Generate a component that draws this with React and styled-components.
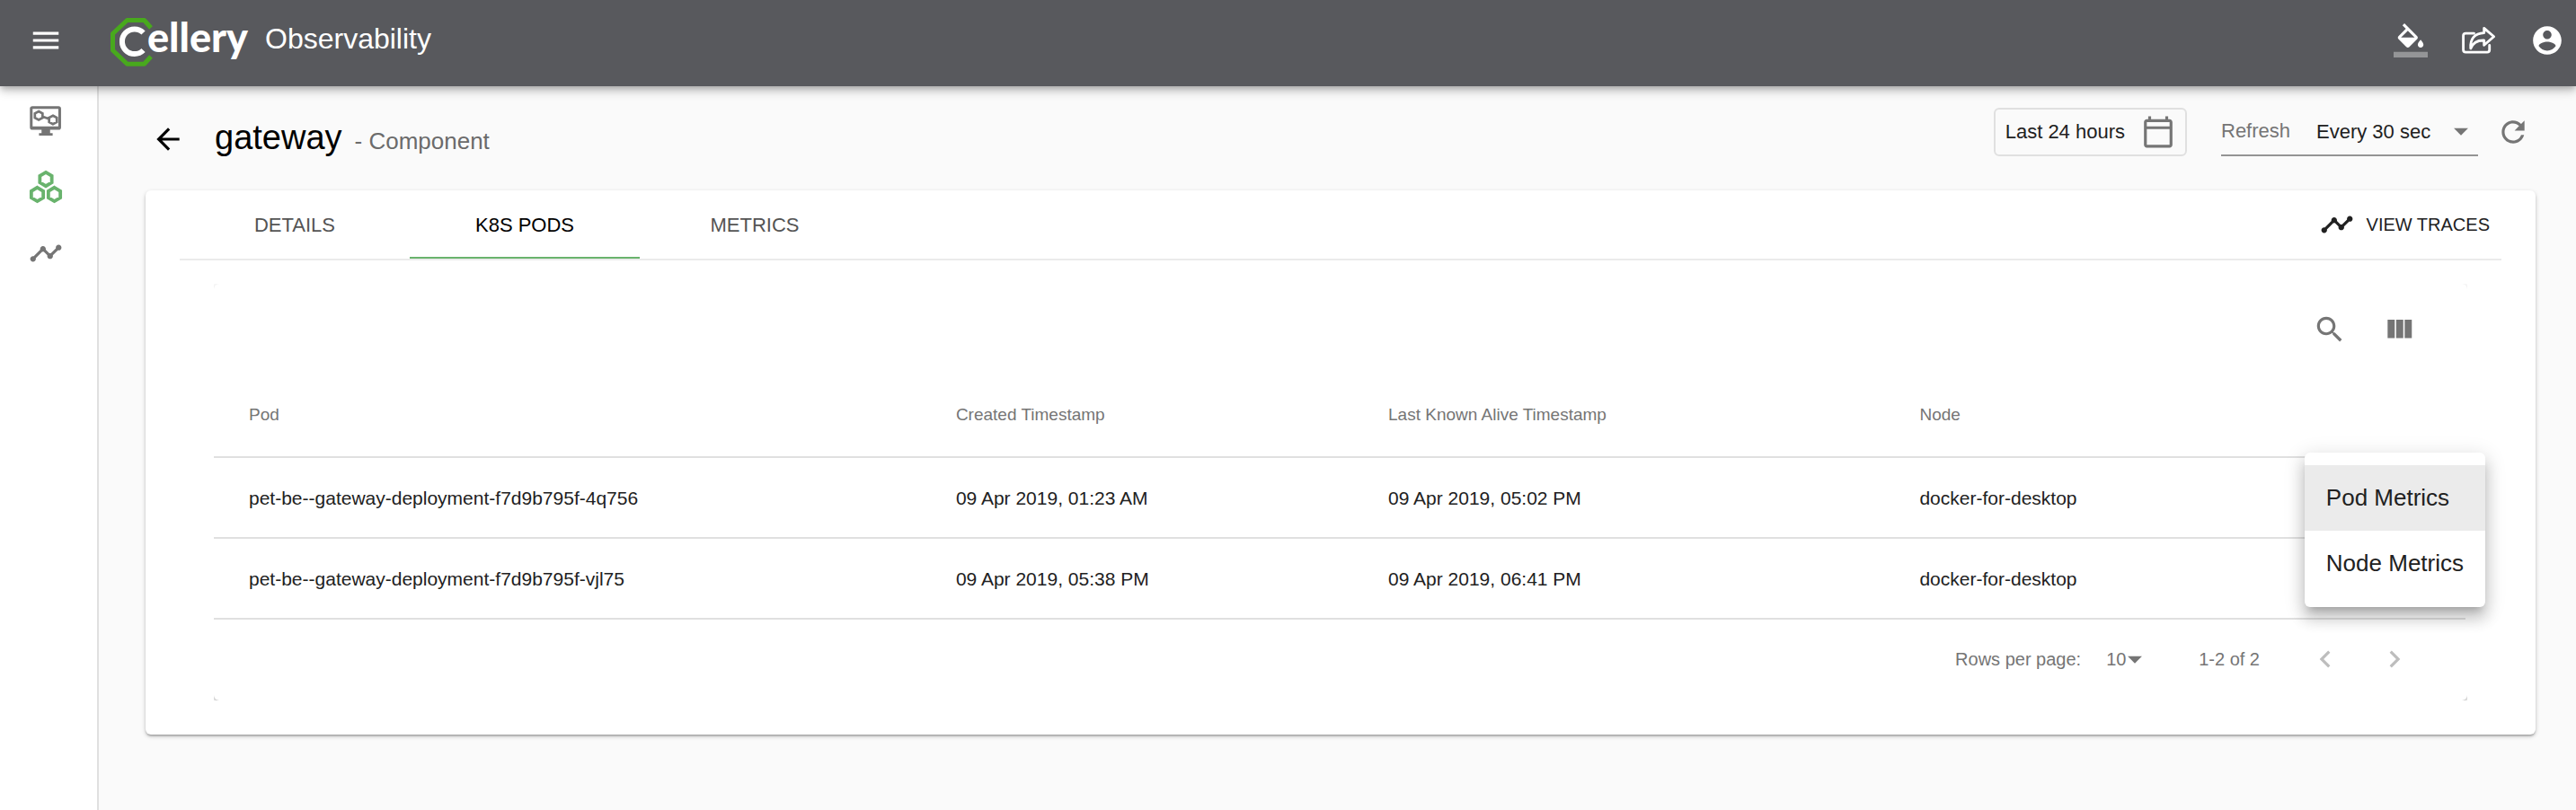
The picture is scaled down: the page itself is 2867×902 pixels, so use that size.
import React from "react";
import styled, { createGlobalStyle, css } from "styled-components";

const Global = createGlobalStyle`
  * { box-sizing: border-box; }
  html, body { margin: 0; background: #fafafa; }
  body, button, select { font-family: "Liberation Sans", Arial, sans-serif; }
`;

const Svg = styled.svg`
  display: block;
  flex: none;
  width: 38px;
  height: 38px;
  fill: currentColor;
`;

const Icon = ({ d, children }) => (
  <Svg viewBox="0 0 24 24" aria-hidden="true">
    {d && <path d={d} />}
    {children}
  </Svg>
);

const TIMELINE =
  "M23 8c0 1.1-.9 2-2 2-.18 0-.35-.02-.51-.07l-3.56 3.55c.05.16.07.34.07.52 0 1.1-.9 2-2 2s-2-.9-2-2c0-.18.02-.36.07-.52l-2.55-2.55c-.16.05-.34.07-.52.07s-.36-.02-.52-.07l-4.55 4.56c.05.16.07.33.07.51 0 1.1-.9 2-2 2s-2-.9-2-2 .9-2 2-2c.18 0 .35.02.51.07l4.56-4.55C8.02 9.36 8 9.18 8 9c0-1.1.9-2 2-2s2 .9 2 2c0 .18-.02.36-.07.52l2.55 2.55c.16-.05.34-.07.52-.07s.36.02.52.07l3.55-3.56C19.02 8.35 19 8.18 19 8c0-1.1.9-2 2-2s2 .9 2 2z";

const IconButton = styled.button`
  display: flex;
  align-items: center;
  justify-content: center;
  flex: none;
  width: ${(p) => (p.$tight ? "38px" : "77px")};
  height: 38px;
  padding: 0;
  border: 0;
  background: none;
  color: ${(p) => p.$color || "#757575"};
  cursor: pointer;
`;

const TopBar = styled.header`
  position: relative;
  z-index: 2;
  display: flex;
  align-items: center;
  height: 96px;
  padding: 0 13px 6px 32px;
  background: #58595d;
  color: #fff;
  box-shadow: 0 3px 6px -2px rgba(0, 0, 0, 0.2), 0 6px 8px rgba(0, 0, 0, 0.14),
    0 2px 16px rgba(0, 0, 0, 0.12);
`;

const Brand = styled.a`
  display: flex;
  align-items: center;
  margin-left: 52px;
  gap: 17px;
  color: inherit;
  text-decoration: none;
`;

const LogoSvg = styled.svg`
  display: block;
  width: 156px;
  height: 60px;
`;

const Product = styled.span`
  padding-bottom: 4px;
  font-size: 32px;
  line-height: 48px;
`;

const TopActions = styled.div`
  display: flex;
  gap: 38px;
  margin-left: auto;
`;

const Shell = styled.div`
  display: flex;
  min-height: calc(100vh - 96px);
`;

const Sidebar = styled.nav`
  flex: none;
  width: 110px;
  padding-top: 1px;
  background: #fff;
  border-right: 2px solid #e0e0e0;
`;

const SideLink = styled.a`
  display: flex;
  align-items: center;
  height: 74px;
  padding-left: 32px;
  color: ${(p) => (p.$active ? "#69b36d" : "#757575")};
`;

const Main = styled.main`
  flex: 1;
  min-width: 0;
  padding: 24px 45px 0 52px;
`;

const PageHead = styled.div`
  display: flex;
  align-items: flex-start;
  height: 92px;
`;

const TitleGroup = styled.div`
  display: flex;
  align-items: center;
  gap: 33px;
  padding: 7px 0 0 6px;
`;

const Title = styled.h1`
  margin: 0;
  font-size: 38px;
  font-weight: 400;
  line-height: 52px;
  color: #000;
`;

const Subtitle = styled.span`
  margin-left: 14px;
  font-size: 26px;
  color: #6b6b6b;
`;

const HeadTools = styled.div`
  display: flex;
  align-items: center;
  height: 54px;
  margin-left: auto;
  padding-right: 6px;
`;

const RangeButton = styled.button`
  display: flex;
  align-items: center;
  gap: 18px;
  height: 54px;
  padding: 0 11px;
  border: 2px solid #e0e0e0;
  border-radius: 6px;
  background: none;
  font-size: 22px;
  color: #212121;
  svg { color: #757575; }
`;

const RefreshField = styled.div`
  display: flex;
  align-items: center;
  height: 54px;
  width: 286px;
  margin: 0 20px 0 38px;
  border-bottom: 2px solid #949494;
  font-size: 22px;
`;

const FieldLabel = styled.label`
  flex: 1;
  color: #757575;
`;

const SelectWrap = styled.span`
  display: flex;
  align-items: center;
  svg {
    margin-left: -38px;
    color: #757575;
    pointer-events: none;
  }
`;

const Select = styled.select`
  appearance: none;
  border: 0;
  padding: 0 ${(p) => p.$pad}px 0 0;
  background: none;
  font-size: ${(p) => p.$size}px;
  color: ${(p) => p.$color};
`;

const Card = styled.section`
  background: #fff;
  padding: 0 38px 38px;
  border-radius: 6px;
  box-shadow: 0 2px 5px rgba(0, 0, 0, 0.2), 0 2px 2px rgba(0, 0, 0, 0.14),
    0 3px 2px -2px rgba(0, 0, 0, 0.12);
`;

const TabBar = styled.div`
  display: flex;
  align-items: center;
  border-bottom: 2px solid #ebebeb;
`;

const Tab = styled.button`
  width: 256px;
  height: 76px;
  padding: 4px 0 0;
  border: 0;
  border-bottom: 2px solid transparent;
  background: none;
  font-size: 22px;
  color: #545454;
  ${(p) =>
    p.$active &&
    css`
      color: #000;
      border-bottom-color: #69b36d;
    `}
`;

const TracesLink = styled.a`
  display: flex;
  align-items: center;
  gap: 14px;
  margin-left: auto;
  padding-right: 13px;
  font-size: 20px;
  color: #212121;
  text-decoration: none;
`;

const TabPanel = styled.div`
  position: relative;
  padding: 26px 38px 0;
`;

const Clip = styled.div`
  overflow: hidden;
`;

const Paper = styled.div`
  background: #fff;
  border-radius: 6px;
  padding-right: 2px;
  box-shadow: 0 2px 8px rgba(0, 0, 0, 0.2), 0 3px 3px rgba(0, 0, 0, 0.14);
`;

const Toolbar = styled.div`
  display: flex;
  align-items: center;
  justify-content: flex-end;
  height: 102px;
  padding-right: 36px;
`;

const Table = styled.table`
  width: 100%;
  border-collapse: separate;
  border-spacing: 0;
  table-layout: fixed;
  text-align: left;
`;

const Col = styled.col`
  width: ${(p) => p.$w};
`;

const HeadCell = styled.th`
  height: 92px;
  padding: 0 0 2px 39px;
  border-bottom: 2px solid #e0e0e0;
  font-size: 19px;
  font-weight: 400;
  color: #757575;
`;

const Cell = styled.td`
  height: 90px;
  padding: 2px 0 0 39px;
  border-bottom: 2px solid #e0e0e0;
  font-size: 21px;
  color: #212121;
`;

const Pager = styled.div`
  display: flex;
  align-items: center;
  justify-content: flex-end;
  height: 90px;
  padding: 0 41px 2px 0;
  font-size: 20px;
  color: #757575;
`;

const PageSize = styled.div`
  display: flex;
  align-items: center;
  gap: 28px;
  margin-right: 52px;
`;

const Range = styled.span`
  margin-right: 34px;
`;

const Menu = styled.div`
  position: absolute;
  top: 214px;
  right: 18px;
  padding: 14px 0 12px;
  border-radius: 6px;
  background: #fff;
  box-shadow: 0 8px 8px -5px rgba(0, 0, 0, 0.2),
    0 13px 16px 2px rgba(0, 0, 0, 0.14), 0 5px 22px 3px rgba(0, 0, 0, 0.12);
`;

const MenuItem = styled.button`
  display: block;
  width: 100%;
  height: 73px;
  padding: 0 24px;
  border: 0;
  background: ${(p) => (p.$selected ? "#ebebeb" : "none")};
  font-size: 26px;
  text-align: left;
  color: #212121;
`;

const WordText = styled.text`
  font-family: Lato, sans-serif;
  font-weight: 900;
  font-size: 45px;
  fill: #fff;
`;

const Logo = () => (
  <LogoSvg viewBox="0 0 156 60" role="img" aria-label="Cellery">
    <path
      d="M46 16L38.500 7.500H19.500L3.500 22.500V41L19.500 56.300H38.500L46 48"
      fill="none"
      stroke="#48a91d"
      strokeWidth="5"
      strokeLinejoin="round"
    />
    <path
      d="M37.500 21.500A13.800 13.800 0 1 0 37.500 41"
      fill="none"
      stroke="#fff"
      strokeWidth="6"
    />
    <WordText x="42" y="43">ellery</WordText>
  </LogoSvg>
);

const MonitorIcon = () => (
  <Icon>
    <path d="M2.500 2h18.500c1 0 1.700.7 1.700 1.700v13.300c0 1-.7 1.700-1.700 1.700H15v2.300h1.800v1.800H7.200V21H9v-2.300H2.500C1.500 18.700.8 18 .8 17V3.700C.8 2.700 1.500 2 2.500 2zm.2 1.900v12.400h18.100V3.900z" fillRule="evenodd" />
    <g fill="none" stroke="currentColor" strokeWidth="1.700">
      <path d="M7 5.700l2.700 1.500v3L7 11.700l-2.700-1.500v-3zM17 8.700l2.700 1.500v3L17 14.700l-2.700-1.500v-3zM9.600 9.300l4.800 1.800" />
    </g>
  </Icon>
);

const HexagonsIcon = () => (
  <Icon>
    <path
      d="M12 1.800l4.200 2.500v4.700L12 11.500 7.800 9V4.300zM6 12.500l4.200 2.500v4.700L6 22.200l-4.200-2.500V15zM18 12.500l4.200 2.500v4.700L18 22.200l-4.200-2.500V15z"
      fill="none"
      stroke="currentColor"
      strokeWidth="2.400"
    />
  </Icon>
);

const ShareIcon = () => (
  <Icon>
    <path
      d="M8.500 7H2.700C1.600 7 1 7.600 1 8.700v9.900c0 1.100.6 1.700 1.700 1.700h15c1.100 0 1.700-.6 1.700-1.700V15.500M6.200 17.600C5.600 10.800 9 7 15.600 6.700V3.400L22.500 9.300l-6.900 6V12c-4.600-.2-7.700 1.200-9.400 5.600z"
      fill="none"
      stroke="currentColor"
      strokeWidth="1.800"
      strokeLinejoin="round"
      strokeLinecap="round"
    />
  </Icon>
);

const PODS = [
  ["pet-be--gateway-deployment-f7d9b795f-4q756", "09 Apr 2019, 01:23 AM", "09 Apr 2019, 05:02 PM", "docker-for-desktop"],
  ["pet-be--gateway-deployment-f7d9b795f-vjl75", "09 Apr 2019, 05:38 PM", "09 Apr 2019, 06:41 PM", "docker-for-desktop"],
];

export default function App() {
  return (
    <>
      <Global />
      <TopBar>
        <IconButton $tight $color="#fff" aria-label="Open menu">
          <Icon d="M3 18h18v-2H3v2zm0-5h18v-2H3v2zm0-7v2h18V6H3z" />
        </IconButton>
        <Brand href="#">
          <Logo />
          <Product>Observability</Product>
        </Brand>
        <TopActions>
          <IconButton $tight $color="#fff" aria-label="Change theme">
            <Icon d="M16.560 8.940L7.620 0 6.210 1.410l2.380 2.380-5.150 5.150c-.59.59-.59 1.540 0 2.120l5.500 5.500c.29.29.68.44 1.060.44s.77-.15 1.060-.44l5.500-5.500c.59-.58.59-1.530 0-2.120zM5.210 10L10 5.210 14.790 10H5.210zM19 11.500s-2 2.170-2 3.500c0 1.100.9 2 2 2s2-.9 2-2c0-1.330-2-3.500-2-3.500z">
              <path d="M0 20h24v4H0z" fillOpacity=".36" />
            </Icon>
          </IconButton>
          <IconButton $tight $color="#fff" aria-label="Share">
            <ShareIcon />
          </IconButton>
          <IconButton $tight $color="#fff" aria-label="Account">
            <Icon d="M12 2C6.480 2 2 6.480 2 12s4.480 10 10 10 10-4.480 10-10S17.520 2 12 2zm0 3c1.660 0 3 1.340 3 3s-1.340 3-3 3-3-1.340-3-3 1.340-3 3-3zm0 14.200c-2.500 0-4.710-1.280-6-3.220.03-1.990 4-3.080 6-3.080 1.990 0 5.970 1.090 6 3.080-1.290 1.940-3.500 3.220-6 3.220z" />
          </IconButton>
        </TopActions>
      </TopBar>
      <Shell>
        <Sidebar>
          <SideLink href="#overview" aria-label="Overview"><MonitorIcon /></SideLink>
          <SideLink href="#cells" $active aria-label="Cells"><HexagonsIcon /></SideLink>
          <SideLink href="#tracing" aria-label="Tracing"><Icon d={TIMELINE} /></SideLink>
        </Sidebar>
        <Main>
          <PageHead>
            <TitleGroup>
              <IconButton $tight $color="#000" aria-label="Back">
                <Icon d="M20 11H7.830l5.590-5.590L12 4l-8 8 8 8 1.410-1.410L7.830 13H20v-2z" />
              </IconButton>
              <Title>
                gateway<Subtitle>- Component</Subtitle>
              </Title>
            </TitleGroup>
            <HeadTools>
              <RangeButton>
                Last 24 hours
                <Icon d="M20 3h-1V1h-2v2H7V1H5v2H4c-1.100 0-2 .9-2 2v16c0 1.100.9 2 2 2h16c1.100 0 2-.9 2-2V5c0-1.100-.9-2-2-2zm0 18H4V10h16v11zm0-13H4V5h16v3z" />
              </RangeButton>
              <RefreshField>
                <FieldLabel htmlFor="refresh">Refresh</FieldLabel>
                <SelectWrap>
                  <Select id="refresh" $pad={52} $size={22} $color="#212121">
                    <option>Every 30 sec</option>
                  </Select>
                  <Icon d="M7 10l5 5 5-5z" />
                </SelectWrap>
              </RefreshField>
              <IconButton $tight aria-label="Refresh now">
                <Icon d="M17.650 6.350C16.200 4.900 14.210 4 12 4c-4.420 0-7.990 3.580-7.990 8s3.570 8 7.990 8c3.730 0 6.840-2.550 7.730-6h-2.080c-.82 2.330-3.040 4-5.650 4-3.310 0-6-2.690-6-6s2.690-6 6-6c1.660 0 3.140.69 4.220 1.780L13 11h7V4l-2.350 2.350z" />
              </IconButton>
            </HeadTools>
          </PageHead>
          <Card>
            <TabBar>
              <Tab>DETAILS</Tab>
              <Tab $active>K8S PODS</Tab>
              <Tab>METRICS</Tab>
              <TracesLink href="#traces">
                <Icon d={TIMELINE} />
                VIEW TRACES
              </TracesLink>
            </TabBar>
            <TabPanel>
              <Clip>
                <Paper>
                  <Toolbar>
                    <IconButton aria-label="Search">
                      <Icon d="M15.500 14h-.79l-.28-.27C15.410 12.590 16 11.110 16 9.500 16 5.910 13.090 3 9.500 3S3 5.910 3 9.500 5.910 16 9.500 16c1.610 0 3.090-.59 4.230-1.570l.27.28v.79l5 4.990L20.490 19l-4.990-5zm-6 0C7.010 14 5 11.990 5 9.500S7.010 5 9.500 5 14 7.010 14 9.500 11.990 14 9.500 14z" />
                    </IconButton>
                    <IconButton aria-label="View columns">
                      <Icon d="M10 18h5V5h-5v13zm-6 0h5V5H4v13zM16 5v13h5V5h-5z" />
                    </IconButton>
                  </Toolbar>
                  <Table>
                    <colgroup>
                      <Col $w="31.4%" />
                      <Col $w="19.2%" />
                      <Col $w="23.6%" />
                      <Col />
                    </colgroup>
                    <thead>
                      <tr>
                        <HeadCell>Pod</HeadCell>
                        <HeadCell>Created Timestamp</HeadCell>
                        <HeadCell>Last Known Alive Timestamp</HeadCell>
                        <HeadCell>Node</HeadCell>
                      </tr>
                    </thead>
                    <tbody>
                      {PODS.map((pod) => (
                        <tr key={pod[0]}>
                          {pod.map((value, i) => (
                            <Cell key={i}>{value}</Cell>
                          ))}
                        </tr>
                      ))}
                    </tbody>
                  </Table>
                  <Pager>
                    <PageSize>
                      <label htmlFor="rows">Rows per page:</label>
                      <SelectWrap>
                        <Select id="rows" $pad={28} $size={20} $color="#757575">
                          <option>10</option>
                        </Select>
                        <Icon d="M7 10l5 5 5-5z" />
                      </SelectWrap>
                    </PageSize>
                    <Range>1-2 of 2</Range>
                    <IconButton $color="#bdbdbd" aria-label="Previous page">
                      <Icon d="M15.410 7.410L14 6l-6 6 6 6 1.410-1.410L10.830 12z" />
                    </IconButton>
                    <IconButton $color="#bdbdbd" aria-label="Next page">
                      <Icon d="M10 6L8.590 7.410 13.170 12l-4.580 4.590L10 18l6-6z" />
                    </IconButton>
                  </Pager>
                </Paper>
              </Clip>
              <Menu role="menu">
                <MenuItem role="menuitem" $selected>Pod Metrics</MenuItem>
                <MenuItem role="menuitem">Node Metrics</MenuItem>
              </Menu>
            </TabPanel>
          </Card>
        </Main>
      </Shell>
    </>
  );
}
